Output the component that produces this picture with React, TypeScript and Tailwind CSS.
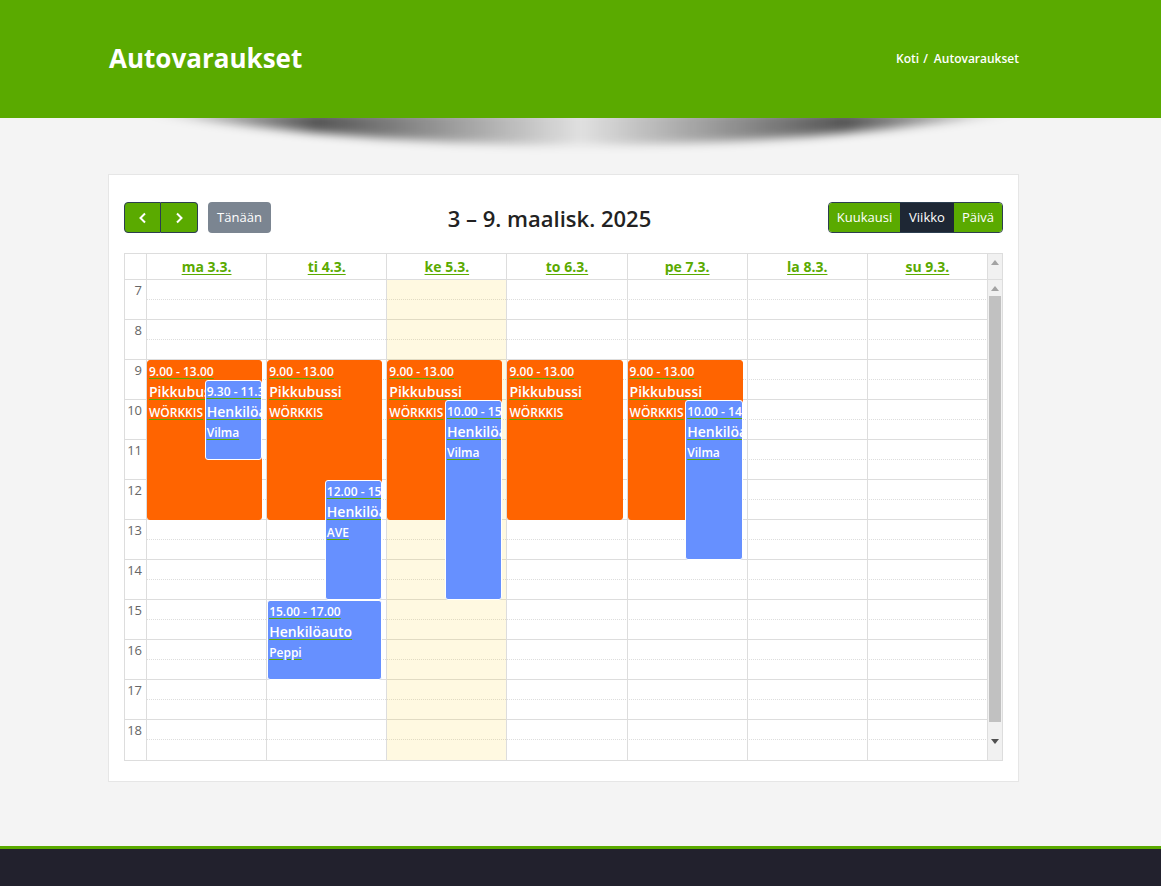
import React from "react";

type Ev = {
  day: number;
  start: number;
  end: number;
  blue: boolean;
  half: boolean;
  time: string;
  title: string;
  sub: string;
};

const days = ["ma 3.3.", "ti 4.3.", "ke 5.3.", "to 6.3.", "pe 7.3.", "la 8.3.", "su 9.3."];

const events: Ev[] = [
  { day: 0, start: 9, end: 13, blue: false, half: false, time: "9.00 - 13.00", title: "Pikkubussi", sub: "WÖRKKIS" },
  { day: 0, start: 9.5, end: 11.5, blue: true, half: true, time: "9.30 - 11.30", title: "Henkilöauto", sub: "Vilma" },
  { day: 1, start: 9, end: 13, blue: false, half: false, time: "9.00 - 13.00", title: "Pikkubussi", sub: "WÖRKKIS" },
  { day: 1, start: 12, end: 15, blue: true, half: true, time: "12.00 - 15.00", title: "Henkilöauto", sub: "AVE" },
  { day: 1, start: 15, end: 17, blue: true, half: false, time: "15.00 - 17.00", title: "Henkilöauto", sub: "Peppi" },
  { day: 2, start: 9, end: 13, blue: false, half: false, time: "9.00 - 13.00", title: "Pikkubussi", sub: "WÖRKKIS" },
  { day: 2, start: 10, end: 15, blue: true, half: true, time: "10.00 - 15.00", title: "Henkilöauto", sub: "Vilma" },
  { day: 3, start: 9, end: 13, blue: false, half: false, time: "9.00 - 13.00", title: "Pikkubussi", sub: "WÖRKKIS" },
  { day: 4, start: 9, end: 13, blue: false, half: false, time: "9.00 - 13.00", title: "Pikkubussi", sub: "WÖRKKIS" },
  { day: 4, start: 10, end: 14, blue: true, half: true, time: "10.00 - 14.00", title: "Henkilöauto", sub: "Vilma" },
];

const hours = [7, 8, 9, 10, 11, 12, 13, 14, 15, 16, 17, 18];

function UpArrow({ color }: { color: string }) {
  return (
    <svg width="8" height="5" viewBox="0 0 8 5">
      <path d="M0 5 L4 0 L8 5 Z" fill={color} />
    </svg>
  );
}

function DownArrow({ color }: { color: string }) {
  return (
    <svg width="8" height="5" viewBox="0 0 8 5">
      <path d="M0 0 L8 0 L4 5 Z" fill={color} />
    </svg>
  );
}

function EventBox({ ev }: { ev: Ev }) {
  const style = { top: `${(ev.start - 7) * 40}px`, height: `${(ev.end - ev.start) * 40}px` };
  const cls = ev.blue
    ? "bg-[#6690ff] border border-white z-20"
    : "bg-[#ff6400] border border-[#ff6400] z-10";
  const pos = ev.half ? "left-[48.4%] right-[4px]" : "left-0 right-[4px]";
  return (
    <div className={`absolute ${pos} ${cls} rounded-[3px] overflow-hidden whitespace-nowrap text-white pl-[1px] pt-[1px]`} style={style}>
      <div className="text-[12px] font-semibold leading-[20px] underline decoration-[#5aaa00] underline-offset-[2px]">{ev.time}</div>
      <div className="text-[14px] font-semibold leading-[20px] underline decoration-[#5aaa00] underline-offset-[2px]">{ev.title}</div>
      <div className="text-[12px] font-semibold leading-[22px] underline decoration-[#5aaa00] underline-offset-[2px]">{ev.sub}</div>
    </div>
  );
}

export default function App() {
  return (
    <div className="min-h-[886px] bg-[#f4f4f4] font-['Open_Sans',sans-serif] flex flex-col">
      {/* Header */}
      <header className="h-[118px] bg-[#5aaa00] shrink-0">
        <div className="ml-[108px] w-[911px] h-full flex items-center justify-between">
          <h1 className="text-[26px] font-bold text-white leading-none pb-[2px] pl-[1px]">Autovaraukset</h1>
          <div className="text-[12px] font-semibold text-white flex items-center gap-[4px]">
            <span>Koti</span>
            <span>/</span>
            <span className="ml-[2px]">Autovaraukset</span>
          </div>
        </div>
      </header>

      {/* curved shadow */}
      <div className="h-[40px] flex justify-center shrink-0">
        <svg width="960" height="40" viewBox="0 0 960 40">
          <defs>
            <linearGradient id="sh" x1="0" y1="0" x2="1" y2="0">
              <stop offset="0" stopColor="#000" stopOpacity="0" />
              <stop offset="0.2" stopColor="#000" stopOpacity="0.65" />
              <stop offset="0.5" stopColor="#000" stopOpacity="0.08" />
              <stop offset="0.8" stopColor="#000" stopOpacity="0.65" />
              <stop offset="1" stopColor="#000" stopOpacity="0" />
            </linearGradient>
            <filter id="bl" x="-10%" y="-50%" width="120%" height="200%">
              <feGaussianBlur stdDeviation="5" />
            </filter>
          </defs>
          <path d="M40 -6 Q480 60 920 -6 Z" fill="url(#sh)" filter="url(#bl)" />
        </svg>
      </div>

      {/* Main card */}
      <main className="flex-1">
        <div className="ml-[108px] w-[911px] mt-[16px] bg-white border border-[#e6e6e6] pt-[27px] pb-[20px] px-[15px]">
          {/* Toolbar */}
          <div className="flex items-center justify-between h-[31px]">
            <div className="flex items-center gap-[10px]">
              <div className="flex">
                <button className="w-[37px] h-[31px] bg-[#5aaa00] border border-[#2c3e50] rounded-l-[4px] flex items-center justify-center text-white">
                  <svg width="10" height="12" viewBox="0 0 10 12"><path d="M7 1.5 L2.5 6 L7 10.5" stroke="white" strokeWidth="2" fill="none" /></svg>
                </button>
                <button className="w-[37px] h-[31px] bg-[#5aaa00] border border-l-0 border-[#2c3e50] rounded-r-[4px] flex items-center justify-center text-white">
                  <svg width="10" height="12" viewBox="0 0 10 12"><path d="M3 1.5 L7.5 6 L3 10.5" stroke="white" strokeWidth="2" fill="none" /></svg>
                </button>
              </div>
              <button className="h-[31px] w-[63px] bg-[#7b8591] rounded-[4px] text-white text-[13px]">Tänään</button>
            </div>
            <h2 className="text-[22px] font-semibold text-[#222] leading-none">3 – 9. maalisk. 2025</h2>
            <div className="flex h-[31px] border border-[#2c3e50] rounded-[4px] overflow-hidden text-[13px] text-white">
              <div className="w-[71px] bg-[#5aaa00] flex items-center justify-center">Kuukausi</div>
              <div className="w-[54px] bg-[#1e2734] flex items-center justify-center">Viikko</div>
              <div className="w-[48px] bg-[#5aaa00] flex items-center justify-center">Päivä</div>
            </div>
          </div>

          {/* Calendar */}
          <div className="mt-[20px] border border-[#dddddd]">
            {/* header row */}
            <div className="flex h-[26px] border-b border-[#dddddd]">
              <div className="w-[22px] border-r border-[#dddddd] shrink-0" />
              <div className="flex-1 grid grid-cols-7">
                {days.map((d) => (
                  <div key={d} className="border-r border-[#dddddd] flex items-center justify-center">
                    <span className="text-[14px] font-bold text-[#5aaa00] underline underline-offset-[2px]">{d}</span>
                  </div>
                ))}
              </div>
              <div className="w-[14px] bg-[#f1f1f1] flex justify-center pt-[6px] shrink-0">
                <UpArrow color="#a3a3a3" />
              </div>
            </div>

            {/* body */}
            <div className="flex">
              <div className="flex-1 relative">
                {hours.map((h, hi) => (
                  <React.Fragment key={h}>
                    <div className="flex h-[20px]">
                      <div className="w-[22px] shrink-0 border-r border-[#dddddd] text-[13px] text-[#666] text-right pr-[4px] leading-[20px]">
                        {h}
                      </div>
                      <div className="flex-1 border-b border-dotted border-[#dddddd]" />
                    </div>
                    <div className={hi === hours.length - 1 ? "flex h-[20px]" : "flex h-[20px] border-b border-[#dddddd]"}>
                      <div className="w-[22px] shrink-0 border-r border-[#dddddd]" />
                      <div className="flex-1" />
                    </div>
                  </React.Fragment>
                ))}
                {/* day columns overlay */}
                <div className="absolute top-0 bottom-0 left-[22px] right-0 grid grid-cols-7">
                  {days.map((d, di) => (
                    <div
                      key={d}
                      className={
                        di === 2
                          ? "relative border-r border-[#dddddd] bg-[rgba(255,214,40,0.14)]"
                          : "relative border-r border-[#dddddd]"
                      }
                    >
                      {events
                        .filter((e) => e.day === di)
                        .map((e, i) => (
                          <EventBox key={i} ev={e} />
                        ))}
                    </div>
                  ))}
                </div>
              </div>
              {/* scrollbar */}
              <div className="w-[14px] bg-[#f1f1f1] shrink-0 flex flex-col items-center">
                <div className="h-[16px] flex items-center">
                  <UpArrow color="#a3a3a3" />
                </div>
                <div className="w-[12px] h-[426px] bg-[#c1c1c1]" />
                <div className="flex-1 flex items-center">
                  <DownArrow color="#505050" />
                </div>
              </div>
            </div>
          </div>
        </div>
      </main>

      {/* Footer */}
      <footer className="h-[40px] bg-[#22212d] border-t-[3px] border-[#5aaa00] shrink-0" />
    </div>
  );
}
